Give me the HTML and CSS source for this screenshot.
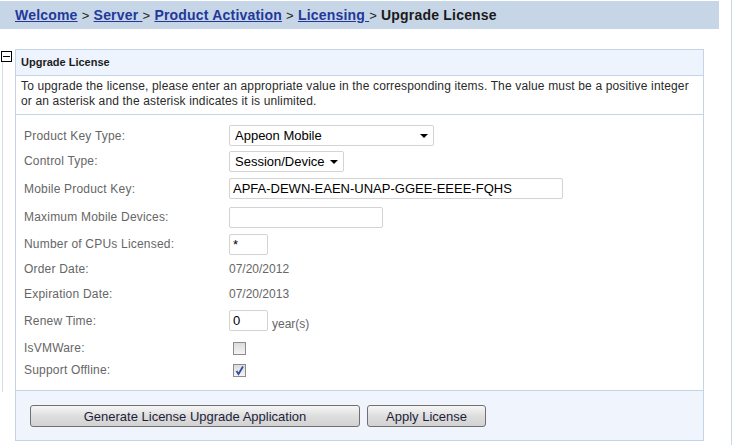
FILE: index.html
```html
<!DOCTYPE html>
<html lang="en">
<head>
  <meta charset="UTF-8" />
  <title>Upgrade License</title>
  <link rel="stylesheet" href="styles.css">
</head>
<body>
<div class="page">

  <div class="crumbs">
    <a href="#">Welcome</a> <span class="sep">&gt;</span>
    <a href="#">Server </a><span class="sep">&gt;</span>
    <a href="#">Product Activation</a> <span class="sep">&gt;</span>
    <a href="#">Licensing </a><span class="sep">&gt;</span>
    <span class="current">Upgrade License</span>
  </div>

  <div class="section">
    <div class="toggle">
      <span class="minus"></span>
      <span class="tree-line"></span>
    </div>

    <div class="panel">
      <div class="panel-head">Upgrade License</div>
      <div class="panel-desc">To upgrade the license, please enter an appropriate value in the corresponding items. The value must be a positive integer or an asterisk and the asterisk indicates it is unlimited.</div>

      <div class="form">
        <label>Product Key Type:</label>
        <span class="select wide"><select><option>Appeon Mobile</option></select></span>

        <label>Control Type:</label>
        <span class="select narrow"><select><option>Session/Device</option></select></span>

        <label>Mobile Product Key:</label>
        <input type="text" class="key" value="APFA-DEWN-EAEN-UNAP-GGEE-EEEE-FQHS">

        <label>Maximum Mobile Devices:</label>
        <input type="text" class="mid" value="">

        <label>Number of CPUs Licensed:</label>
        <input type="text" class="small" value="*">

        <label>Order Date:</label>
        <span class="value">07/20/2012</span>

        <label>Expiration Date:</label>
        <span class="value">07/20/2013</span>

        <label>Renew Time:</label>
        <span class="inline"><input type="text" class="small" value="0"><span class="unit">year(s)</span></span>

        <label>IsVMWare:</label>
        <span class="check"></span>

        <label>Support Offline:</label>
        <span class="check">
          <svg width="11" height="11" viewBox="0 0 11 11"><path d="M2.5 6 L4.5 9 L9 1.5" fill="none" stroke="#2f4f9f" stroke-width="1.8"/></svg>
        </span>
      </div>

      <div class="panel-foot">
        <button class="btn gen">Generate License Upgrade Application</button>
        <button class="btn apply">Apply License</button>
      </div>
    </div>
  </div>

</div>
</body>
</html>
```

FILE: styles.css
```css
body {
  margin: 0;
  font-family: "Liberation Sans", Arial, sans-serif;
  background: #fff;
}

.page {
  width: 732px;
  height: 445px;
  padding-top: 1px;
  box-sizing: border-box;
  border-right: 1px solid #c9d7e7;
}

/* breadcrumb bar */
.crumbs {
  width: 719px;
  height: 28px;
  line-height: 29px;
  padding-left: 15px;
  box-sizing: border-box;
  background: #c6d6e7;
  font-size: 14px;
  font-weight: bold;
  letter-spacing: 0.2px;
  white-space: nowrap;
}

.crumbs a {
  color: #23389a;
}

.crumbs .sep {
  font-weight: normal;
  font-size: 13px;
  color: #222;
}

.crumbs .current {
  color: #1a1a1a;
}

.section {
  display: flex;
  margin-top: 20px;
}

.toggle {
  width: 15px;
  display: flex;
  flex-direction: column;
}

.minus {
  display: block;
  width: 9px;
  height: 9px;
  margin: 2px 0 0 1px;
  border: 1px solid #000;
  background: #fff;
  position: relative;
}

.minus::after {
  content: "";
  position: absolute;
  left: 1px;
  right: 1px;
  top: 4px;
  height: 1px;
  background: #000;
}

.tree-line {
  width: 0;
  height: 330px;
  margin-left: 2px;
  border-left: 1px solid #d3deeb;
}

/* panel */
.panel {
  width: 689px;
  border: 1px solid #c5d5e6;
  box-sizing: border-box;
}

.panel-head {
  height: 25px;
  line-height: 25px;
  padding-left: 5px;
  background: #eef4fd;
  border-bottom: 1px solid #c5d5e6;
  font-size: 11px;
  font-weight: bold;
  color: #1c1c1c;
}

.panel-desc {
  padding: 3px 5px 5px;
  line-height: 15px;
  font-size: 12px;
  letter-spacing: 0.15px;
  color: #2a2a2a;
  border-bottom: 1px solid #c5d5e6;
}

.form {
  display: grid;
  grid-template-columns: 205px 1fr;
  grid-template-rows: 25px 26px 29px 28px 26px 24px 26px 27px 28px 16px;
  align-items: center;
  padding: 8px 0 12px 8px;
  font-size: 12px;
  color: #666;
}

.form label {
  color: #666;
  letter-spacing: 0.2px;
}

.form input[type=text] {
  height: 21px;
  box-sizing: border-box;
  border: 1px solid #d3d3d3;
  border-radius: 2px;
  padding: 0 3px;
  font-family: "Liberation Sans", Arial, sans-serif;
  font-size: 13px;
  color: #000;
  outline: none;
}

.form input.key { width: 334px; }
.form input.mid { width: 154px; }
.form input.small { width: 39px; }

.select {
  position: relative;
  display: inline-block;
  justify-self: start;
}

.select select {
  appearance: none;
  -webkit-appearance: none;
  height: 21px;
  border: 1px solid #d3d3d3;
  border-radius: 2px;
  background: #fff;
  padding: 0 0 0 5px;
  font-family: "Liberation Sans", Arial, sans-serif;
  font-size: 13px;
  color: #000;
}

.select.wide select { width: 205px; }
.select.narrow select { width: 115px; }

.select::after {
  content: "";
  position: absolute;
  right: 6px;
  top: 9px;
  border-left: 4px solid transparent;
  border-right: 4px solid transparent;
  border-top: 4px solid #000;
  pointer-events: none;
}

.value {
  color: #666;
}

.inline {
  display: flex;
  align-items: flex-end;
}

.unit {
  margin-left: 4px;
  line-height: 14px;
}

.check {
  justify-self: start;
  margin-left: 4px;
  width: 11px;
  height: 11px;
  border: 1px solid #8c8c8c;
  background: linear-gradient(#dcdcdc, #f4f4f4);
  display: flex;
  align-items: center;
  justify-content: center;
}

.panel-foot {
  border-top: 1px solid #c5d5e6;
  background: #f0f5fd;
  padding: 14px 14px 13px;
  display: flex;
  gap: 7px;
}

.btn {
  height: 22px;
  border: 1px solid #707070;
  border-radius: 3px;
  background: linear-gradient(#f6f6f6, #dedede 50%, #d2d2d2);
  font-family: "Liberation Sans", Arial, sans-serif;
  font-size: 13px;
  color: #1e1e3c;
  padding: 0;
}

.btn.gen { width: 330px; }
.btn.apply { width: 119px; }
```
